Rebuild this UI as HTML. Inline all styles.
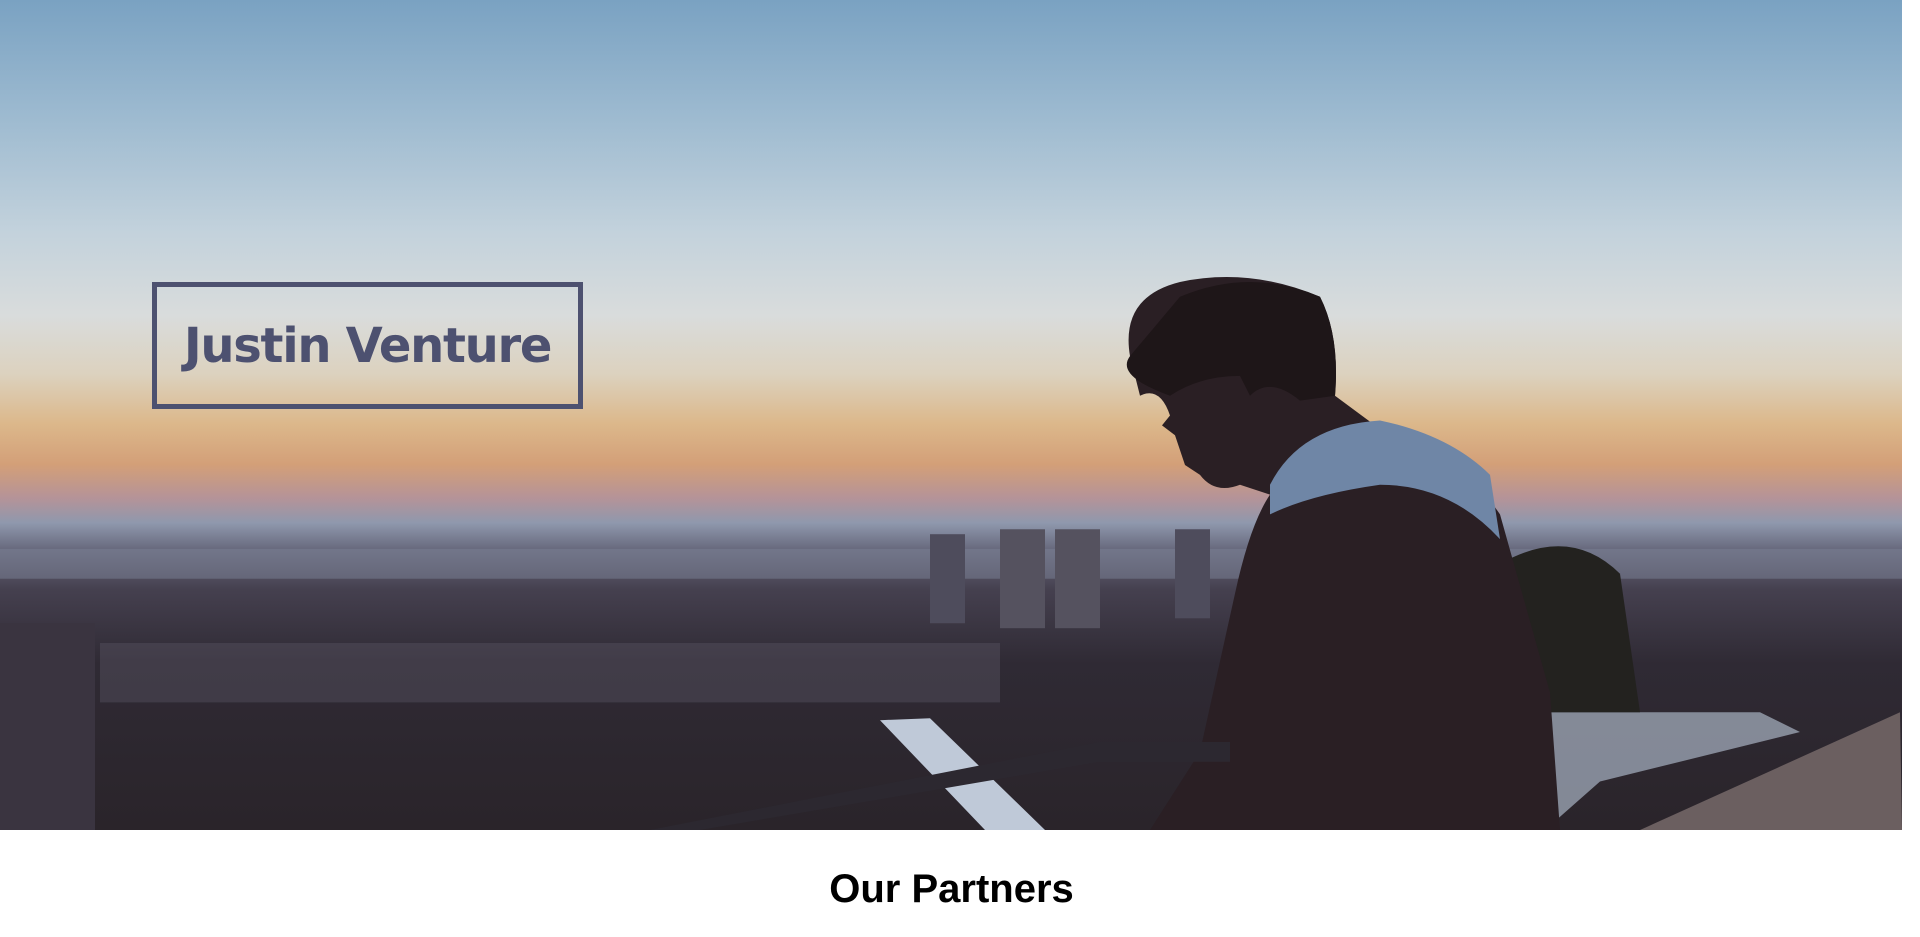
<!DOCTYPE html>
<html><head><meta charset="utf-8"><style>
body{margin:0;width:1920px;height:937px;background:#fff;overflow:hidden;font-family:"Liberation Sans",sans-serif}
.hero{position:absolute;left:0;top:0;width:1902px;height:830px;overflow:hidden;
background:linear-gradient(180deg,#7aa2c2 0%,#9dbad0 14%,#c3d2dc 28%,#d9dcdc 38%,#dcd2bf 45%,#dcb88b 51%,#d39f78 56%,#b59398 60%,#8f98ad 63%,#6a6c80 66%,#45404f 71%,#2f2a34 80%,#2a242a 100%)}
.box{position:absolute;left:152px;top:282px;width:421px;height:117px;border:5px solid #4d5170;display:flex;align-items:center;justify-content:center;color:#4d5170;font-family:"DejaVu Sans",sans-serif;font-weight:bold;font-size:48px;letter-spacing:-1.3px}
h2{position:absolute;top:867px;left:0;width:1903px;text-align:center;margin:0;font-size:40px;font-weight:bold;color:#000}
</style></head><body>
<div class="hero">
<svg width="1902" height="830" viewBox="0 0 1902 839" preserveAspectRatio="none" style="position:absolute;left:0;top:0">
<rect x="0" y="555" width="1902" height="30" fill="#7b8196" opacity=".5"/>
<rect x="0" y="630" width="95" height="209" fill="#3a3440"/>
<rect x="930" y="540" width="35" height="90" fill="#4e4c5c"/>
<rect x="1000" y="535" width="45" height="100" fill="#55525f"/>
<rect x="1055" y="535" width="45" height="100" fill="#55525f"/>
<rect x="1175" y="535" width="35" height="90" fill="#4e4c5c"/>
<rect x="100" y="650" width="900" height="60" fill="#5c5866" opacity=".4"/>
<path d="M1545 720 L1760 720 L1800 740 L1600 790 L1545 839Z" fill="#9aa3b1" opacity=".8"/>
<path d="M1640 839 L1900 720 L1902 839Z" fill="#6b5f60"/>
<path d="M1500 570 Q1570 530 1620 580 L1640 720 L1500 720Z" fill="#23221f"/>
<path d="M1130 360 Q1120 300 1180 285 Q1250 270 1320 300 Q1340 340 1335 400 L1375 430 Q1460 460 1500 520 L1550 700 L1560 839 L1150 839 L1200 760 L1235 600 Q1250 530 1270 500 L1240 490 Q1215 500 1200 480 L1185 470 L1175 440 L1162 430 L1170 420 Q1160 390 1140 400Z" fill="#2a1f24"/>
<path d="M1270 490 Q1300 430 1380 425 Q1450 440 1490 480 L1500 545 Q1450 490 1380 490 Q1310 500 1270 520Z" fill="#6f86a6"/>
<path d="M1180 300 Q1250 270 1320 300 Q1340 340 1335 400 L1300 405 Q1270 380 1250 400 L1240 380 Q1200 380 1170 400 Q1115 380 1130 360Z" fill="#1e1618"/>
<path d="M880 728 L930 726 L1045 839 L985 839Z" fill="#bfc9d8"/>
<path d="M650 839 L1100 750 L1230 750 L1230 770 L1100 770 L700 839Z" fill="#2c2830"/>
</svg>
<div class="box">Justin Venture</div>
</div>
<h2>Our Partners</h2>
</body></html>
